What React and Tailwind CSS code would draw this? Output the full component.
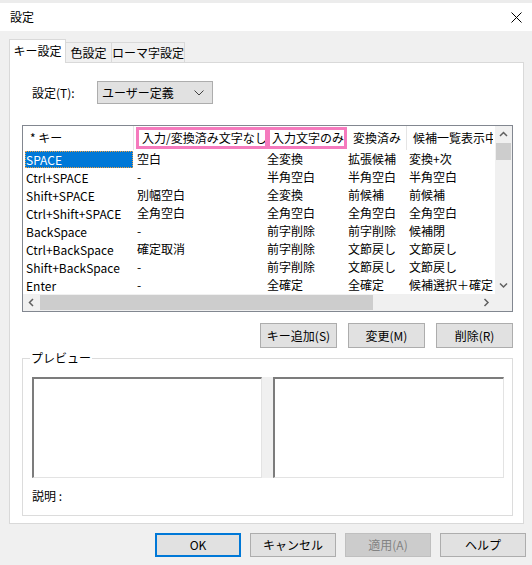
import React from 'react';

const rows = [
  ['SPACE', '空白', '全変換', '拡張候補', '変換+次'],
  ['Ctrl+SPACE', '-', '半角空白', '半角空白', '半角空白'],
  ['Shift+SPACE', '別幅空白', '全変換', '前候補', '前候補'],
  ['Ctrl+Shift+SPACE', '全角空白', '全角空白', '全角空白', '全角空白'],
  ['BackSpace', '-', '前字削除', '前字削除', '候補閉'],
  ['Ctrl+BackSpace', '確定取消', '前字削除', '文節戻し', '文節戻し'],
  ['Shift+BackSpace', '-', '前字削除', '文節戻し', '文節戻し'],
  ['Enter', '-', '全確定', '全確定', '候補選択＋確定'],
];

// column widths + cell padding, written out so tailwind picks them up
const cols = [
  'w-[111px] pl-[2px]',
  'w-[130px] pl-[3px]',
  'w-[82px] pl-[3px]',
  'w-[61px] pl-[2px]',
  'w-[86px] pl-[2px]',
];

function Arrow({ dir }) {
  const d = {
    up: 'M1 5 L4.5 1.5 L8 5',
    down: 'M1 1.5 L4.5 5 L8 1.5',
    left: 'M5 1 L1.5 4.5 L5 8',
    right: 'M1.5 1 L5 4.5 L1.5 8',
  }[dir];
  const vertical = dir === 'up' || dir === 'down';
  return (
    <svg
      width={vertical ? 9 : 7}
      height={vertical ? 7 : 9}
      viewBox={vertical ? '0 0 9 7' : '0 0 7 9'}
      fill="none"
      stroke="#606060"
      strokeWidth="1.5"
    >
      <path d={d} />
    </svg>
  );
}

function Button({ children, className = '' }) {
  return (
    <div className={`flex items-center justify-center border ${className}`}>
      {children}
    </div>
  );
}

function KeyList() {
  return (
    <div className="flex h-[187px] w-full flex-col border border-[#828790] bg-white">
      <div className="flex h-[168px]">
        <div className="flex-1 overflow-hidden">
          {/* header */}
          <div className="flex h-[24px] w-[470px]">
            <div className="flex w-[111px] shrink-0 items-center border-r border-[#e5e5e5] pl-[7px]">* キー</div>
            <div className="flex w-[130px] shrink-0 items-stretch px-[2px] py-px">
              <div className="flex flex-1 items-center border-[3px] border-[#f57abd] pl-[3px] whitespace-nowrap">入力/変換済み文字なし</div>
            </div>
            <div className="flex w-[82px] shrink-0 items-stretch px-px py-px">
              <div className="flex flex-1 items-center border-[3px] border-[#f57abd] pl-[4px] whitespace-nowrap">入力文字のみ</div>
            </div>
            <div className="flex w-[61px] shrink-0 items-center border-r border-[#e5e5e5] pl-[7px] whitespace-nowrap">変換済み</div>
            <div className="flex w-[86px] shrink-0 items-center overflow-hidden pl-[6px] whitespace-nowrap">候補一覧表示中</div>
          </div>
          {/* rows */}
          {rows.map((row, r) => (
            <div key={r} className="flex h-[18px] w-[470px]">
              {row.map((cell, c) =>
                c === 0 ? (
                  <div key={c} className={`${cols[c]} shrink-0 pr-px pt-px`}>
                    <div
                      className={
                        r === 0
                          ? 'flex h-full items-center border border-dotted border-[#f0a040] bg-[#0078d7] text-white'
                          : 'flex h-full items-center pl-px'
                      }
                    >
                      {cell}
                    </div>
                  </div>
                ) : (
                  <div key={c} className={`${cols[c]} flex shrink-0 items-center overflow-hidden whitespace-nowrap`}>
                    {cell}
                  </div>
                )
              )}
            </div>
          ))}
        </div>
        {/* vertical scrollbar */}
        <div className="flex w-[17px] flex-col bg-[#f0f0f0]">
          <div className="flex h-[17px] items-center justify-center"><Arrow dir="up" /></div>
          <div className="mx-px h-[17px] bg-[#cdcdcd]" />
          <div className="flex-1" />
          <div className="flex h-[17px] items-center justify-center"><Arrow dir="down" /></div>
        </div>
      </div>
      {/* horizontal scrollbar */}
      <div className="flex h-[17px]">
        <div className="flex flex-1 bg-[#f0f0f0]">
          <div className="flex w-[17px] items-center justify-center"><Arrow dir="left" /></div>
          <div className="my-px w-[333px] bg-[#cdcdcd]" />
          <div className="flex-1" />
          <div className="flex w-[17px] items-center justify-center"><Arrow dir="right" /></div>
        </div>
        <div className="w-[17px] bg-[#f0f0f0]" />
      </div>
    </div>
  );
}

export default function App() {
  return (
    <div
      className="flex h-[565px] w-[532px] flex-col overflow-hidden bg-[#f0f0f0] text-[12px] leading-[16px] text-black"
      style={{ fontFamily: '"Noto Sans CJK JP", "Noto Sans", sans-serif' }}
    >
      {/* title bar */}
      <div className="h-[3px] bg-[#ececec]" />
      <div className="flex h-[28px] items-center justify-between bg-white pl-[10px] pr-[10px]">
        <span>設定</span>
        <svg width="11" height="11" viewBox="0 0 11 11" stroke="#000" strokeWidth="1">
          <path d="M0.5 0.5 L10.5 10.5 M10.5 0.5 L0.5 10.5" />
        </svg>
      </div>

      {/* tabs */}
      <div className="ml-[9px] mt-[8px] flex h-[23px] items-end">
        <div className="relative z-10 -mb-px flex h-[24px] w-[57px] items-start justify-center border-x border-t border-[#d9d9d9] bg-white pt-[3px]">
          キー設定
        </div>
        <div className="flex h-[20px] w-[46px] items-center justify-center border-r border-t border-[#d9d9d9]">色設定</div>
        <div className="flex h-[20px] w-[73px] items-center justify-center border-r border-t border-[#d9d9d9]">ローマ字設定</div>
      </div>

      {/* tab page */}
      <div className="ml-[9px] flex h-[462px] w-[515px] flex-col border border-[#d9d9d9] bg-white pb-[7px] pl-[12px] pr-[10px] pt-[18px]">
        <div className="flex h-[23px] items-center pl-[10px]">
          <span className="w-[65px]">設定(T):</span>
          <div className="flex h-[23px] w-[116px] items-center justify-between border border-[#adadad] bg-[#e1e1e1] pl-[4px] pr-[8px]">
            <span>ユーザー定義</span>
            <svg width="10" height="6" viewBox="0 0 10 6" fill="none" stroke="#404040" strokeWidth="1">
              <path d="M0.5 0.5 L5 5 L9.5 0.5" />
            </svg>
          </div>
        </div>

        <div className="mt-[21px]">
          <KeyList />
        </div>

        <div className="mt-[11px] flex justify-end gap-[11px]">
          <Button className="h-[25px] w-[77px] border-[#adadad] bg-[#e1e1e1]">キー追加(S)</Button>
          <Button className="h-[25px] w-[77px] border-[#adadad] bg-[#e1e1e1]">変更(M)</Button>
          <Button className="h-[25px] w-[77px] border-[#adadad] bg-[#e1e1e1]">削除(R)</Button>
        </div>

        <fieldset className="mt-[2px] flex-1 border border-[#dcdcdc] pb-[10px] pl-[9px] pr-[8px]">
          <legend className="-ml-[2px] px-px">プレビュー</legend>
          <div className="mt-[11px] flex h-[101px]">
            <div className="w-[230px] border-b border-l-2 border-r border-t-2 border-b-[#e3e3e3] border-l-[#7c7c7c] border-r-[#e3e3e3] border-t-[#7c7c7c] bg-white" />
            <div className="w-[11px] bg-[#f0f0f0]" />
            <div className="flex-1 border-b border-l-2 border-r border-t-2 border-b-[#e3e3e3] border-l-[#7c7c7c] border-r-[#e3e3e3] border-t-[#7c7c7c] bg-white" />
          </div>
          <div className="mt-[10px]">説明 :</div>
        </fieldset>
      </div>

      {/* dialog buttons */}
      <div className="mt-[9px] flex gap-[9px] pl-[155px]">
        <Button className="h-[24px] w-[86px] border-2 border-[#0078d7] bg-[#e1e1e1]">OK</Button>
        <Button className="h-[24px] w-[86px] border-[#adadad] bg-[#e1e1e1]">キャンセル</Button>
        <Button className="h-[24px] w-[86px] border-[#bfbfbf] bg-[#cccccc] text-[#838383]">適用(A)</Button>
        <Button className="h-[24px] w-[86px] border-[#adadad] bg-[#e1e1e1]">ヘルプ</Button>
      </div>
    </div>
  );
}
